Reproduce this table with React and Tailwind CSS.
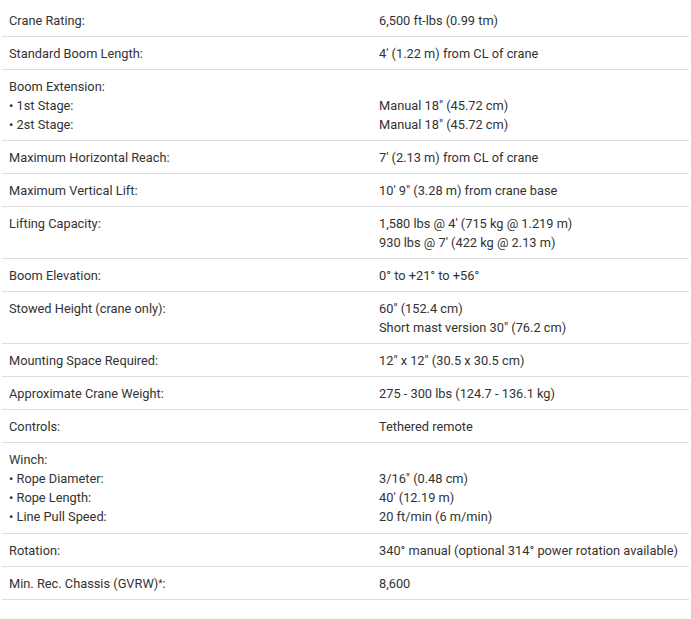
const rows = [
  [["Crane Rating:"], ["6,500 ft-lbs (0.99 tm)"]],
  [["Standard Boom Length:"], ["4' (1.22 m) from CL of crane"]],
  [["Boom Extension:", "• 1st Stage:", "• 2st Stage:"], ["", "Manual 18\" (45.72 cm)", "Manual 18\" (45.72 cm)"]],
  [["Maximum Horizontal Reach:"], ["7' (2.13 m) from CL of crane"]],
  [["Maximum Vertical Lift:"], ["10' 9\" (3.28 m) from crane base"]],
  [["Lifting Capacity:"], ["1,580 lbs @ 4' (715 kg @ 1.219 m)", "930 lbs @ 7' (422 kg @ 2.13 m)"]],
  [["Boom Elevation:"], ["0° to +21° to +56°"]],
  [["Stowed Height (crane only):"], ["60\" (152.4 cm)", "Short mast version 30\" (76.2 cm)"]],
  [["Mounting Space Required:"], ["12\" x 12\" (30.5 x 30.5 cm)"]],
  [["Approximate Crane Weight:"], ["275 - 300 lbs (124.7 - 136.1 kg)"]],
  [["Controls:"], ["Tethered remote"]],
  [["Winch:", "• Rope Diameter:", "• Rope Length:", "• Line Pull Speed:"], ["", "3/16\" (0.48 cm)", "40' (12.19 m)", "20 ft/min (6 m/min)"]],
  [["Rotation:"], ["340° manual (optional 314° power rotation available)"]],
  [["GVRW"], ["8,600"]],
];

function Lines({ lines }) {
  return (
    <div className="flex flex-col">
      {lines.map((l, i) => (
        <div key={i} className="h-[19px] whitespace-nowrap">
          {l === "GVRW" ? (
            <span>
              Min. Rec. Chassis (GVRW)<sup className="text-[10px] relative -top-[1px]">*</sup>:
            </span>
          ) : (
            l || "\u00a0"
          )}
        </div>
      ))}
    </div>
  );
}

export default function App() {
  return (
    <div
      className="w-[691px] h-[619px] bg-white px-[2px] pt-[4px] text-[12.8px] leading-[19px] text-[#333]"
      style={{ fontFamily: "Roboto, 'Liberation Sans', sans-serif" }}
    >
      {rows.map(([l, r], i) => (
        <div
          key={i}
          className={
            l.length === 4
              ? "flex border-b border-[#dcdcdf] pt-[7px] pb-[7px]"
              : "flex border-b border-[#dcdcdf] pt-[7px] pb-[6px]"
          }
        >
          <div className="w-[370px] pl-[7px]">
            <Lines lines={l} />
          </div>
          <div className="flex-1 pl-[7px]">
            <Lines lines={r} />
          </div>
        </div>
      ))}
    </div>
  );
}
